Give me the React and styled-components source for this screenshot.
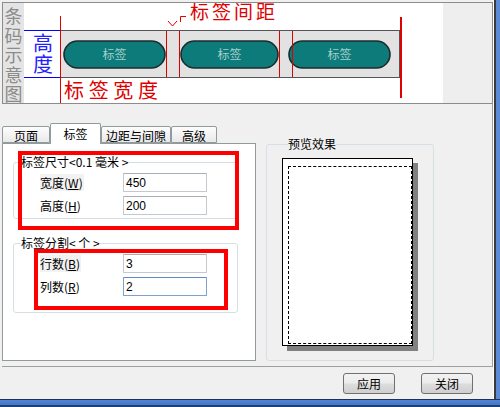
import React from "react";
import styled, { createGlobalStyle } from "styled-components";

const GlobalStyle = createGlobalStyle`
  html, body {
    margin: 0;
    padding: 0;
    background: #f0f0f0;
  }
  body {
    font-family: "Noto Sans CJK SC", "Liberation Sans", sans-serif;
    font-size: 12px;
    color: #000;
    overflow: hidden;
  }
`;

const Window = styled.div`
  width: 500px;
  height: 407px;
  display: flex;
  flex-direction: column;
  background: #f0f0f0;
`;

const Frame = styled.div`
  flex: 1;
  display: flex;
  min-height: 0;
`;

const Content = styled.div`
  width: 493px;
  box-sizing: border-box;
  padding: 2px 0 0 2px;
  display: flex;
  flex-direction: column;
`;

const RightEdge = styled.div`
  width: 7px;
  background: linear-gradient(
    to right,
    #ffffff 0 1px,
    #3a3a3a 1px 3px,
    #5b8bd6 3px 100%
  );
`;

const BottomEdge = styled.div`
  height: 8px;
  box-sizing: border-box;
  border-top: 1px solid #22324a;
  border-bottom: 2px solid #1f3f72;
  background: linear-gradient(#4f83d4, #4577c6);
`;

/* ---------- top diagram ---------- */

const TopBox = styled.div`
  width: 491px;
  height: 102px;
  box-sizing: border-box;
  border: 1px solid #8c8c8c;
  display: flex;
  background: #eeeeee;
`;

const SideTitle = styled.div`
  width: 21px;
  background: #e4e4e4;
  color: #8c8c8c;
  font-size: 18px;
  line-height: 19.5px;
  display: flex;
  flex-direction: column;
  align-items: center;
  padding-top: 3px;
  box-sizing: border-box;
  overflow: hidden;
`;

const Diagram = styled.svg`
  display: block;
  flex: none;
`;

const Pill = ({ x, w }) => (
  <g>
    <rect
      x={x}
      y="41"
      width={w}
      height="27"
      rx="13.5"
      fill="#0d7b79"
      stroke="#1c2b2b"
      strokeWidth="1.6"
    />
    <text
      x={x + w / 2}
      y="59"
      fontSize="12"
      fill="#a8cfcd"
      textAnchor="middle"
      fontFamily="Noto Sans CJK SC, sans-serif"
    >
      标签
    </text>
  </g>
);

const BarcodeDiagram = () => (
  <Diagram width="419" height="100" viewBox="24 3 419 100">
    <rect x="24" y="3" width="419" height="100" fill="#ffffff" />
    <text
      x="190"
      y="19"
      fontSize="19"
      fill="#e00000"
      textLength="85"
      fontFamily="Noto Sans CJK SC, sans-serif"
    >
      标签间距
    </text>
    <path
      d="M186 16.5 H180.5 V22 M168 21 L172.5 26 L177 21"
      fill="none"
      stroke="#e00000"
      strokeWidth="1"
    />
    <line x1="24" y1="30.5" x2="60" y2="30.5" stroke="#0000ff" />
    <line x1="24" y1="77.5" x2="60" y2="77.5" stroke="#0000ff" />
    <rect
      x="60.5"
      y="30.5"
      width="339"
      height="47"
      fill="#e2e2e2"
      stroke="#555555"
    />
    <Pill x={64} w={101} />
    <Pill x={181} w={97} />
    <Pill x={289} w={101} />
    <line x1="60.5" y1="16" x2="60.5" y2="103" stroke="#e00000" />
    <line x1="166.5" y1="31" x2="166.5" y2="77" stroke="#e00000" />
    <line x1="179.5" y1="31" x2="179.5" y2="77" stroke="#e00000" />
    <line x1="279.5" y1="31" x2="279.5" y2="77" stroke="#e00000" />
    <line x1="292.5" y1="31" x2="292.5" y2="77" stroke="#e00000" />
    <line x1="401" y1="17" x2="401" y2="98" stroke="#e00000" strokeWidth="2" />
    <text
      x="33"
      y="51"
      fontSize="20"
      fill="#2222ff"
      fontFamily="Noto Sans CJK SC, sans-serif"
    >
      高
    </text>
    <text
      x="33"
      y="72"
      fontSize="20"
      fill="#2222ff"
      fontFamily="Noto Sans CJK SC, sans-serif"
    >
      度
    </text>
    <text
      x="64"
      y="98"
      fontSize="20"
      fill="#e00000"
      textLength="94"
      fontFamily="Noto Sans CJK SC, sans-serif"
    >
      标签宽度
    </text>
  </Diagram>
);

/* ---------- lower area ---------- */

const LowerBox = styled.div`
  width: 491px;
  height: 263px;
  box-sizing: border-box;
  border-right: 1px solid #a0a0a0;
  border-bottom: 1px solid #a0a0a0;
  padding-top: 19px;
  display: flex;
  align-items: flex-start;
`;

const LeftCol = styled.div`
  width: 254px;
  display: flex;
  flex-direction: column;
`;

const TabRow = styled.div`
  height: 20px;
  display: flex;
  align-items: flex-end;
  position: relative;
  z-index: 1;
`;

const Tab = styled.div`
  width: ${({ $w }) => $w}px;
  height: ${({ $active }) => ($active ? 21 : 17)}px;
  margin-bottom: ${({ $active }) => ($active ? -1 : 0)}px;
  box-sizing: border-box;
  border: 1px solid #919b9c;
  border-bottom: ${({ $active }) => ($active ? "none" : "1px solid #919b9c")};
  border-radius: 2px 2px 0 0;
  background: ${({ $active }) =>
    $active ? "#ffffff" : "linear-gradient(#fdfdfd, #e9e9e9)"};
  display: flex;
  align-items: center;
  justify-content: center;
  padding-top: ${({ $active }) => ($active ? 0 : 2)}px;
  font-size: 12px;
  line-height: 14px;
  white-space: nowrap;
`;

const Panel = styled.div`
  width: 254px;
  height: 218px;
  box-sizing: border-box;
  border: 1px solid #919b9c;
  background: #ffffff;
  position: relative;
  padding: 11px 0 0 10px;
`;

const Group = styled.fieldset`
  margin: ${({ $mt }) => $mt || 0}px 0 0 0;
  width: 225px;
  box-sizing: border-box;
  border: 1px solid #d5dfe5;
  border-radius: 3px;
  padding: 4px 0 ${({ $pb }) => $pb}px 0;
`;

const Legend = styled.legend`
  margin-left: 7px;
  padding: 0;
  font-size: 12px;
  line-height: 14px;
  white-space: pre;
`;

const Rows = styled.div`
  display: grid;
  grid-template-columns: 83px 84px;
  row-gap: 4px;
  align-items: center;
  padding-left: 26px;
`;

const Label = styled.span`
  justify-self: start;
  font-size: 12px;
  line-height: 17px;
  padding-right: 1px;
  background: ${({ $shade }) => ($shade ? "#f2f2f2" : "transparent")};

  u {
    text-decoration-thickness: 1px;
    text-underline-offset: 1px;
  }
`;

const Field = styled.input`
  width: 84px;
  height: 19px;
  box-sizing: border-box;
  margin: 0;
  padding: 0 0 0 2px;
  border: 1px solid ${({ $focus }) => ($focus ? "#7da2ce" : "#c5c9cf")};
  border-top-color: ${({ $focus }) => ($focus ? "#5c8ac4" : "#abadb3")};
  border-radius: 1px;
  font-family: "Liberation Sans", "DejaVu Sans", sans-serif;
  font-size: 12px;
  color: #000;
  background: #fff;
  outline: none;
`;

const RedMark = styled.div`
  position: absolute;
  left: ${({ $l }) => $l}px;
  top: ${({ $t }) => $t}px;
  width: ${({ $w }) => $w}px;
  height: ${({ $h }) => $h}px;
  box-sizing: border-box;
  border: 4px solid #ff0000;
  pointer-events: none;
`;

const Preview = styled.fieldset`
  margin: 14px 0 0 10px;
  width: 168px;
  box-sizing: border-box;
  border: 1px solid #d5dfe5;
  border-radius: 3px;
  padding: 7px 0 14px 15px;
`;

const PreviewLegend = styled.legend`
  margin-left: 6px;
  padding: 0;
  font-size: 12px;
  line-height: 14px;
`;

const Paper = styled.div`
  width: 131px;
  height: 188px;
  box-sizing: border-box;
  border: 1px solid #000;
  background: #fff;
  box-shadow: 5px 5px 0 #808080;
  padding: 7px 0 1px 5px;
  display: flex;
`;

const Printable = styled.div`
  flex: 1;
  border: 1px dashed #000;
`;

const ButtonBar = styled.div`
  height: 32px;
  display: flex;
  justify-content: flex-end;
  align-items: flex-start;
  gap: 26px;
  padding: 6px 20px 0 0;
  box-sizing: border-box;
`;

const Button = styled.button`
  width: 52px;
  height: 21px;
  margin: 0;
  padding: 0;
  border: 1px solid #707070;
  border-radius: 3px;
  background: linear-gradient(#f2f2f2 0%, #ebebeb 48%, #dddddd 52%, #cfcfcf 100%);
  font-family: "Noto Sans CJK SC", sans-serif;
  font-size: 12px;
  line-height: 14px;
  color: #000;
`;

const Hotkey = ({ k }) => (
  <>
    (<u>{k}</u>)
  </>
);

const App = () => {
  return (
    <>
      <GlobalStyle />
      <Window>
        <Frame>
          <Content>
            <TopBox>
              <SideTitle>
                <span>条</span>
                <span>码</span>
                <span>示</span>
                <span>意</span>
                <span>图</span>
              </SideTitle>
              <BarcodeDiagram />
            </TopBox>

            <LowerBox>
              <LeftCol>
                <TabRow>
                  <Tab $w={48}>页面</Tab>
                  <Tab $w={51} $active>
                    标签
                  </Tab>
                  <Tab $w={70}>边距与间隙</Tab>
                  <Tab $w={46}>高级</Tab>
                </TabRow>
                <Panel>
                  <Group $pb={3}>
                    <Legend>标签尺寸&lt;0.1 毫米 &gt;</Legend>
                    <Rows>
                      <Label $shade>
                        宽度<Hotkey k="W" />
                      </Label>
                      <Field defaultValue="450" />
                      <Label>
                        高度<Hotkey k="H" />
                      </Label>
                      <Field defaultValue="200" />
                    </Rows>
                  </Group>
                  <Group $mt={17} $pb={16}>
                    <Legend>标签分割&lt; 个 &gt;</Legend>
                    <Rows>
                      <Label $shade>
                        行数<Hotkey k="B" />
                      </Label>
                      <Field defaultValue="3" />
                      <Label>
                        列数<Hotkey k="R" />
                      </Label>
                      <Field defaultValue="2" $focus />
                    </Rows>
                  </Group>
                  <RedMark $l={15} $t={7} $w={221} $h={79} />
                  <RedMark $l={31} $t={105} $w={194} $h={61} />
                </Panel>
              </LeftCol>

              <Preview>
                <PreviewLegend>预览效果</PreviewLegend>
                <Paper>
                  <Printable />
                </Paper>
              </Preview>
            </LowerBox>

            <ButtonBar>
              <Button>应用</Button>
              <Button>关闭</Button>
            </ButtonBar>
          </Content>
          <RightEdge />
        </Frame>
        <BottomEdge />
      </Window>
    </>
  );
};

export default App;
